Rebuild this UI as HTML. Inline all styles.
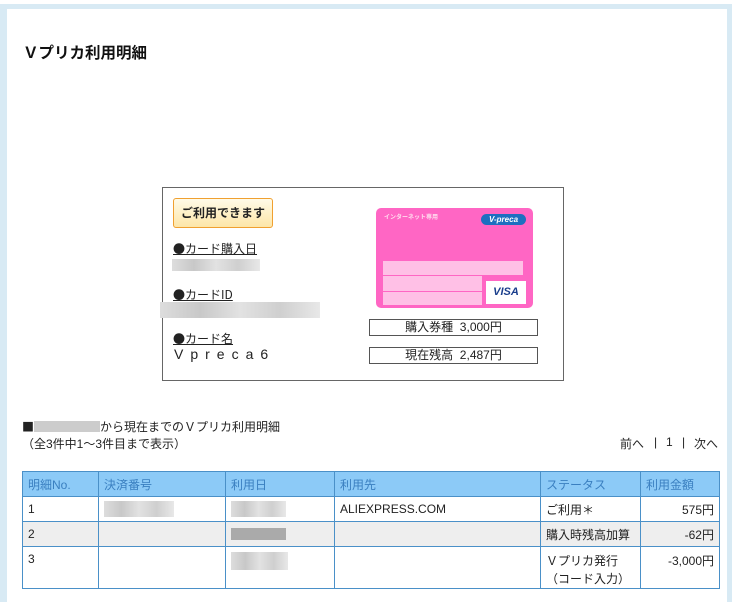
<!DOCTYPE html>
<html><head><meta charset="utf-8"><style>
*{margin:0;padding:0;box-sizing:border-box}
body{width:732px;height:602px;background:#fff;position:relative;overflow:hidden;font-family:"Liberation Sans","Noto Sans CJK JP",sans-serif;color:#222;font-size:12px}
.a{position:absolute}
.j{font-family:"Noto Sans CJK JP",sans-serif}
.blur{background:linear-gradient(90deg,#ddd,#c8c8c8,#e2e2e2,#cfcfcf,#e8e8e8);}
table{border-collapse:collapse;position:absolute;left:22px;top:471px;width:698px;font-size:12px}
td{border:1px solid #4a90c8;padding:0 5px;height:25px;vertical-align:middle}
tr.h td{background:#8ccaf7;color:#3a7fc0}
tr.g td{background:#eee}
.r{text-align:right}
</style></head><body>
<div class="a" style="left:0;top:4px;width:732px;height:598px;background:#d8eaf4"></div>
<div class="a" style="left:7px;top:9px;width:720px;height:593px;background:#fff"></div>
<div class="a" style="left:23px;top:41px;font-size:15.5px;font-weight:bold;color:#111">Ｖプリカ利用明細</div>

<div class="a" style="left:162px;top:187px;width:402px;height:194px;border:1px solid #666"></div>
<div class="a" style="left:173px;top:198px;width:100px;height:30px;border:1px solid #f0a030;border-radius:3px;background:linear-gradient(#fffbe8,#fde6a8);font-size:12px;font-weight:bold;text-align:center;line-height:28px">ご利用できます</div>
<div class="a j" style="left:173px;top:240px;font-size:12px;text-decoration:underline">●カード購入日</div>
<div class="a blur" style="left:172px;top:259px;width:88px;height:12px"></div>
<div class="a j" style="left:173px;top:286px;font-size:12px;text-decoration:underline">●カードID</div>
<div class="a blur" style="left:160px;top:302px;width:160px;height:16px"></div>
<div class="a j" style="left:173px;top:330px;font-size:12px;text-decoration:underline">●カード名</div>
<div class="a" style="left:174px;top:346px;font-size:14px;letter-spacing:7px">Vpreca6</div>

<div class="a" style="left:376px;top:208px;width:157px;height:100px;background:#ff66c4;border-radius:5px">
 <div class="a" style="left:8px;top:4px;color:#fde;font-size:6px;font-weight:bold">インターネット専用</div>
 <div class="a" style="left:105px;top:6px;width:45px;height:11px;background:#1d6fc0;border-radius:6px;color:#fff;font-size:8px;font-weight:bold;font-style:italic;text-align:center;line-height:11px">V-preca</div>
 <div class="a" style="left:7px;top:53px;width:140px;height:14px;background:#ffc0e6"></div>
 <div class="a" style="left:7px;top:68px;width:99px;height:15px;background:#ffc0e6"></div>
 <div class="a" style="left:7px;top:84px;width:99px;height:13px;background:#ffc0e6"></div>
 <div class="a" style="left:110px;top:73px;width:40px;height:23px;background:#fff;color:#1a3e8c;font-weight:bold;font-style:italic;font-size:11px;text-align:center;line-height:23px">VISA</div>
</div>
<div class="a" style="left:369px;top:319px;width:169px;height:17px;border:1px solid #555;text-align:center;line-height:15px">購入券種&nbsp;&nbsp;3,000円</div>
<div class="a" style="left:369px;top:347px;width:169px;height:17px;border:1px solid #555;text-align:center;line-height:15px">現在残高&nbsp;&nbsp;2,487円</div>

<div class="a" style="left:22px;top:418px"><span class="j">■</span><span style="display:inline-block;width:66px;height:11px;background:#ccc;vertical-align:-1px"></span>から現在までのＶプリカ利用明細</div>
<div class="a" style="left:22px;top:435px">（全3件中1～3件目まで表示）</div>
<div class="a" style="left:620px;top:435px">前へ</div>
<div class="a" style="left:654px;top:435px">|</div>
<div class="a" style="left:666px;top:435px">1</div>
<div class="a" style="left:682px;top:435px">|</div>
<div class="a" style="left:694px;top:435px">次へ</div>

<table>
<tr class="h"><td style="width:76px">明細No.</td><td style="width:127px">決済番号</td><td style="width:109px">利用日</td><td style="width:206px">利用先</td><td style="width:100px">ステータス</td><td>利用金額</td></tr>
<tr><td>1</td><td><div class="blur" style="width:70px;height:16px"></div></td><td><div class="blur" style="width:55px;height:16px"></div></td><td>ALIEXPRESS.COM</td><td>ご利用＊</td><td class="r">575円</td></tr>
<tr class="g"><td>2</td><td></td><td><div style="width:55px;height:12px;background:#aaa"></div></td><td></td><td>購入時残高加算</td><td class="r">-62円</td></tr>
<tr><td style="height:42px;vertical-align:top;padding-top:5px">3</td><td></td><td style="vertical-align:top;padding-top:5px"><div class="blur" style="width:57px;height:18px"></div></td><td></td><td style="vertical-align:top;padding-top:5px;line-height:18px">Ｖプリカ発行<br>（コード入力）</td><td class="r" style="vertical-align:top;padding-top:5px">-3,000円</td></tr>
</table>
</body></html>
